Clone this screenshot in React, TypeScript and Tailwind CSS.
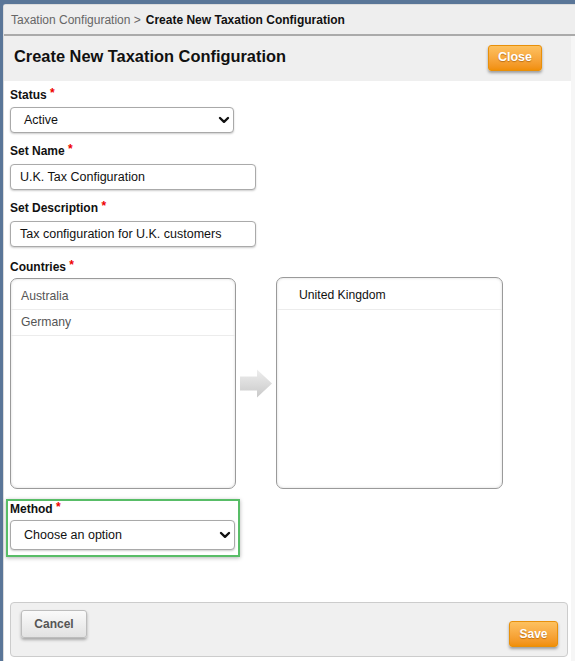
import { ReactNode } from "react"

const font = { fontFamily: '"Liberation Sans", Arial, sans-serif' }

const Label = ({ children, className = "" }: { children: ReactNode; className?: string }) => (
  <div className={`h-[14px] leading-[14px] text-[12px] font-bold text-[#111] ${className}`}>
    {children} <span className="text-[#e00] relative -top-[2px]">*</span>
  </div>
)

const Chevron = () => (
  <svg width="12" height="8" viewBox="0 0 12 8" className="shrink-0">
    <path d="M2 2 L6 5.8 L10 2" fill="none" stroke="#111" strokeWidth="2.4" strokeLinecap="round" strokeLinejoin="round" />
  </svg>
)

const SelectBox = ({ value, className = "" }: { value: string; className?: string }) => (
  <div
    className={`flex items-center justify-between pl-[13px] pr-[3px] bg-white border border-[#a9a9a9] rounded-[4px] shadow-[0_1px_2px_rgba(0,0,0,0.2)] text-[12.5px] text-[#111] ${className}`}
  >
    <span>{value}</span>
    <Chevron />
  </div>
)

const TextBox = ({ value }: { value: string }) => (
  <div className="flex items-center w-[246px] h-[26px] pl-[9px] bg-white border border-[#aaa] rounded-[4px] shadow-[0_1px_2px_rgba(0,0,0,0.2)] text-[12.5px] text-[#111]">
    {value}
  </div>
)

const OrangeButton = ({ label, className = "" }: { label: string; className?: string }) => (
  <button
    className={`flex items-center justify-center rounded-[3px] border border-[#e8900a] bg-gradient-to-b from-[#fdc15f] to-[#f18f06] text-white font-bold text-[12.5px] shadow-[0_2px_3px_rgba(0,0,0,0.35)] [text-shadow:0_1px_1px_rgba(150,80,0,0.6)] ${className}`}
  >
    {label}
  </button>
)

export default function App() {
  return (
    <div style={font} className="w-[575px] h-[661px] overflow-hidden bg-[#5a7698] pt-[4px] pl-[3px]">
      <div className="h-full bg-white border-l border-t border-[#dcdcdc] rounded-tl-[3px] flex flex-col">

        {/* breadcrumb */}
        <div className="h-[31px] shrink-0 flex items-center pl-[7px] bg-[#eeeeee] border-b-2 border-[#aaaaaa] text-[12px]">
          <span className="text-[#666]">Taxation Configuration &gt;</span>
          <span className="ml-[5px] font-bold text-[#111]">Create New Taxation Configuration</span>
        </div>

        <div className="flex-1 flex border-r-4 border-[#f6f6f6]">
          <div className="flex-1 flex flex-col">

            {/* header */}
            <div className="h-[45px] shrink-0 flex items-center justify-between pl-[10px] pr-[29px] bg-[#efefef]">
              <h1 className="text-[16.4px] font-bold text-[#111] -mt-[4px]">Create New Taxation Configuration</h1>
              <OrangeButton label="Close" className="w-[54px] h-[26px] -mt-[2px]" />
            </div>

            <div className="flex flex-col pl-[6px]">
              <Label className="mt-[7px]">Status</Label>
              <SelectBox value="Active" className="mt-[5px] w-[224px] h-[26px]" />

              <Label className="mt-[11px]">Set Name</Label>
              <div className="mt-[6px]"><TextBox value="U.K. Tax Configuration" /></div>

              <Label className="mt-[11px]">Set Description</Label>
              <div className="mt-[6px]"><TextBox value="Tax configuration for U.K. customers" /></div>

              <Label className="mt-[13px]">Countries</Label>
              <div className="mt-[4px] flex">
                <div className="w-[226px] h-[211px] border border-[#9a9a9a] rounded-[7px] shadow-[inset_0_0_3px_rgba(0,0,0,0.15)] pt-[4px] text-[12.2px] text-[#555]">
                  <div className="h-[27px] flex items-center pl-[10px] border-b border-[#ececec]">Australia</div>
                  <div className="h-[26px] flex items-center pl-[10px] border-b border-[#ececec]">Germany</div>
                </div>
                <div className="w-[40px] flex items-center justify-center">
                  <svg width="34" height="29" viewBox="0 0 34 29">
                    <defs>
                      <linearGradient id="arr" x1="0" y1="0" x2="0" y2="1">
                        <stop offset="0" stopColor="#eeeeee" />
                        <stop offset="1" stopColor="#c9c9c9" />
                      </linearGradient>
                    </defs>
                    <path d="M1 7.5 H18 V0.5 L33 14.5 L18 28.5 V21.5 H1 Z" fill="url(#arr)" />
                  </svg>
                </div>
                <div className="w-[227px] h-[212px] -mt-px border border-[#9a9a9a] rounded-[7px] shadow-[inset_0_0_3px_rgba(0,0,0,0.15)] pt-[4px] text-[12.2px] text-[#111]">
                  <div className="h-[28px] flex items-center pl-[22px] border-b border-[#ececec]">United Kingdom</div>
                </div>
              </div>

              {/* method */}
              <div className="mt-[10px] -ml-[4px] w-[234px] h-[58px] border-2 border-[#58bd67] shadow-[0_1px_4px_rgba(0,0,0,0.3)] pl-[2px]">
                <Label className="mt-[1px]">Method</Label>
                <SelectBox value="Choose an option" className="mt-[4px] w-[225px] h-[30px]" />
              </div>
            </div>

            {/* footer */}
            <div className="mt-[45px] ml-[6px] w-[558px] h-[55px] flex justify-between items-start px-[10px] pt-[7px] bg-[#f0f0f0] border border-[#cccccc] rounded-[4px]">
              <button className="w-[66px] h-[28px] rounded-[3px] border border-[#bdbdbd] bg-gradient-to-b from-[#fafafa] to-[#e2e2e2] text-[12px] font-bold text-[#555] shadow-[0_2px_3px_rgba(0,0,0,0.3)]">
                Cancel
              </button>
              <OrangeButton label="Save" className="mt-[11px] -mr-[1px] w-[49px] h-[26px] text-[12px]" />
            </div>
          </div>
        </div>
      </div>
    </div>
  )
}
